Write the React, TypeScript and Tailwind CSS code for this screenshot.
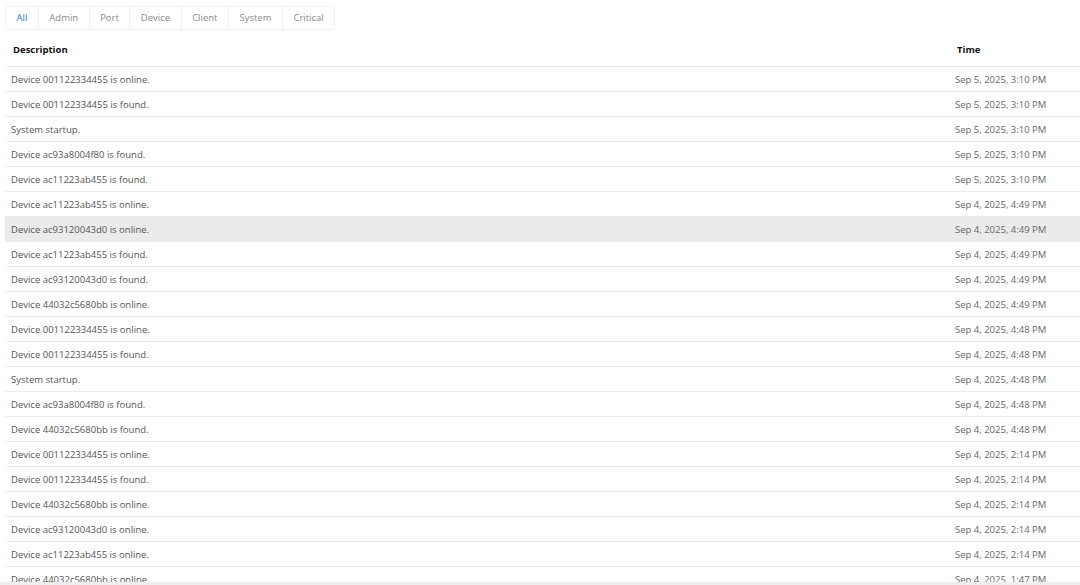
const tabs = ["All", "Admin", "Port", "Device", "Client", "System", "Critical"];

const rows: [string, string][] = [
  ["Device 001122334455 is online.", "Sep 5, 2025, 3:10 PM"],
  ["Device 001122334455 is found.", "Sep 5, 2025, 3:10 PM"],
  ["System startup.", "Sep 5, 2025, 3:10 PM"],
  ["Device ac93a8004f80 is found.", "Sep 5, 2025, 3:10 PM"],
  ["Device ac11223ab455 is found.", "Sep 5, 2025, 3:10 PM"],
  ["Device ac11223ab455 is online.", "Sep 4, 2025, 4:49 PM"],
  ["Device ac93120043d0 is online.", "Sep 4, 2025, 4:49 PM"],
  ["Device ac11223ab455 is found.", "Sep 4, 2025, 4:49 PM"],
  ["Device ac93120043d0 is found.", "Sep 4, 2025, 4:49 PM"],
  ["Device 44032c5680bb is online.", "Sep 4, 2025, 4:49 PM"],
  ["Device 001122334455 is online.", "Sep 4, 2025, 4:48 PM"],
  ["Device 001122334455 is found.", "Sep 4, 2025, 4:48 PM"],
  ["System startup.", "Sep 4, 2025, 4:48 PM"],
  ["Device ac93a8004f80 is found.", "Sep 4, 2025, 4:48 PM"],
  ["Device 44032c5680bb is found.", "Sep 4, 2025, 4:48 PM"],
  ["Device 001122334455 is online.", "Sep 4, 2025, 2:14 PM"],
  ["Device 001122334455 is found.", "Sep 4, 2025, 2:14 PM"],
  ["Device 44032c5680bb is online.", "Sep 4, 2025, 2:14 PM"],
  ["Device ac93120043d0 is online.", "Sep 4, 2025, 2:14 PM"],
  ["Device ac11223ab455 is online.", "Sep 4, 2025, 2:14 PM"],
  ["Device 44032c5680bb is online.", "Sep 4, 2025, 1:47 PM"],
];

export default function App() {
  return (
    <div
      className="flex flex-col h-[585px] overflow-hidden bg-white text-[9.5px]"
      style={{ fontFamily: '"Open Sans", "Noto Sans", sans-serif' }}
    >
      <div className="pl-[5px] pt-[6px]">
        <div className="inline-flex h-[24px] border border-[#f0f0f0] rounded-[4px] divide-x divide-[#f0f0f0]">
          {tabs.map((t, i) => (
            <div
              key={t}
              className={`flex items-center px-[10.5px] ${i === 0 ? "text-[#2f7ae5]" : "text-[#8a8a8a]"}`}
            >
              {t}
            </div>
          ))}
        </div>
      </div>

      <div className="flex-1 overflow-hidden pl-[5px]">
        <div className="flex h-[37px] items-end pb-[9px] border-b border-[#ececec] font-bold text-[#111]">
          <div className="flex-1 pl-[8px]">Description</div>
          <div className="w-[130px] pl-[7px]">Time</div>
        </div>
        {rows.map(([d, t], i) => (
          <div
            key={i}
            className={`flex h-[25px] items-center pt-[2px] border-b border-[#ececec] ${i === 6 ? "bg-[#ebebeb]" : ""}`}
          >
            <div className="flex-1 pl-[6px] text-[#555]">{d}</div>
            <div className="w-[130px] pl-[5px] text-[#666]">{t}</div>
          </div>
        ))}
      </div>
      <div className="h-[3px] bg-[#eeeeee]" />
    </div>
  );
}
